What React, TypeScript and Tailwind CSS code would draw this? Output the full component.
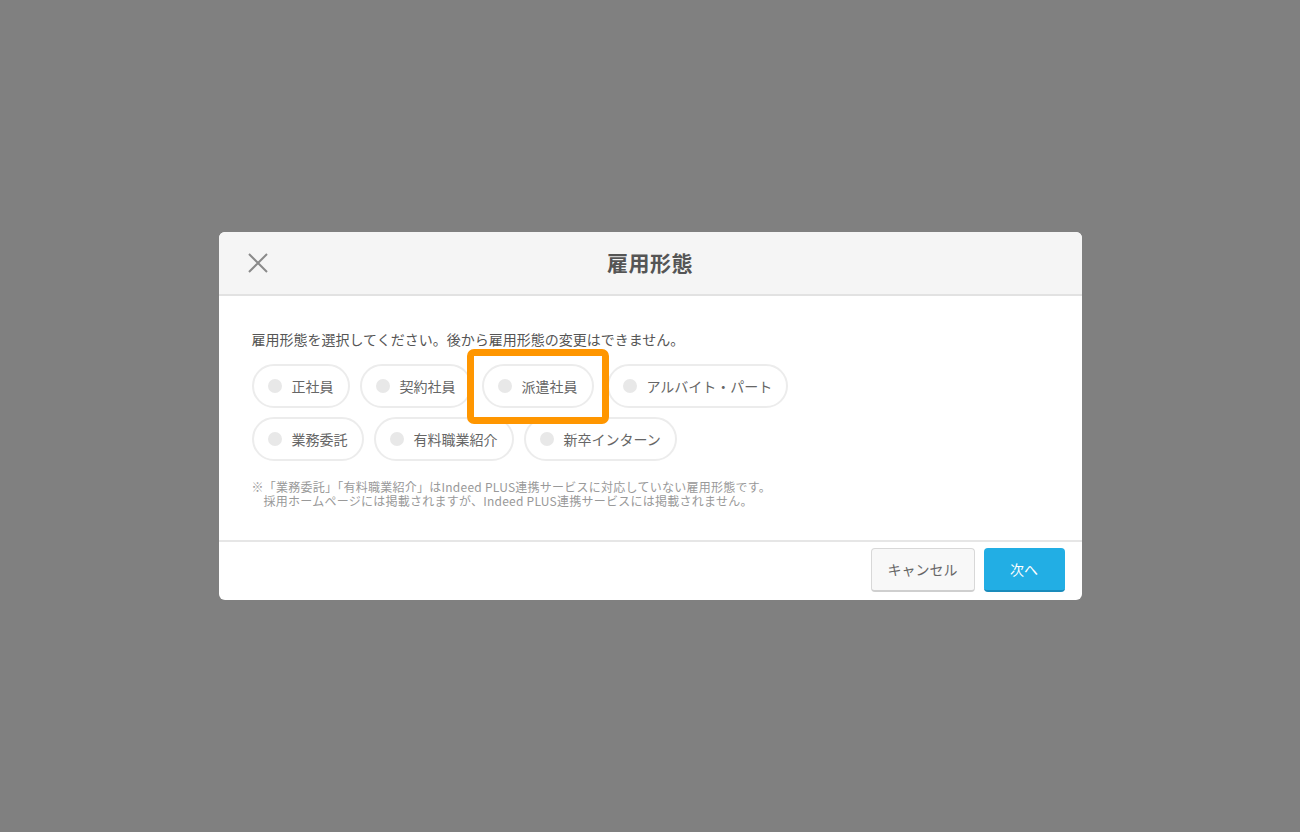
import React from "react";

const FONT = {
  fontFamily:
    '"Noto Sans CJK JP", "Noto Sans", "Liberation Sans", sans-serif',
};

type PillProps = { label: string; highlighted?: boolean; className?: string };

const Pill = ({ label, highlighted, className = "" }: PillProps) => (
  <div className={`relative ${className}`}>
    <label className="flex h-[44px] items-center gap-[10px] rounded-full border-2 border-[#ececec] bg-white px-[14px] text-[14px] text-[#666] cursor-pointer">
      <span className="block h-[14px] w-[14px] rounded-full bg-[#e8e8e8]" />
      <span className="whitespace-nowrap">{label}</span>
    </label>
    {highlighted && (
      <div className="pointer-events-none absolute -top-[15px] -bottom-[16px] -left-[15px] -right-[15px] z-10 rounded-[7px] border-[7px] border-[#ff9600]" />
    )}
  </div>
);

export default function App() {
  return (
    <div
      className="flex h-[832px] w-full items-center justify-center bg-[#808080]"
      style={FONT}
    >
      <div className="w-[863px] overflow-hidden rounded-[6px] bg-white">
        {/* header */}
        <div className="grid h-[64px] grid-cols-[1fr_auto_1fr] items-center border-b-2 border-[#e2e2e2] bg-[#f5f5f5] px-[29px]">
          <button className="flex h-[20px] w-[20px] items-center justify-center">
            <svg width="20" height="20" viewBox="0 0 20 20">
              <path
                d="M1 1L19 19M19 1L1 19"
                stroke="#8a8a8a"
                strokeWidth="2"
                fill="none"
              />
            </svg>
          </button>
          <h2 className="text-[21px] font-bold tracking-[0.5px] text-[#555]">
            雇用形態
          </h2>
          <div />
        </div>

        {/* body */}
        <div className="px-[33px] pt-[33px] pb-[32px]">
          <p className="text-[14px] leading-[20px] text-[#555]">
            雇用形態を選択してください。後から雇用形態の変更はできません。
          </p>
          <div className="mt-[15px] flex flex-col gap-[9px]">
            <div className="flex gap-[10px]">
              <Pill label="正社員" />
              <Pill label="契約社員" />
              <Pill label="派遣社員" highlighted />
              <Pill label="アルバイト・パート" className="ml-[3px]" />
            </div>
            <div className="flex gap-[10px]">
              <Pill label="業務委託" />
              <Pill label="有料職業紹介" />
              <Pill label="新卒インターン" />
            </div>
          </div>
          <div className="mt-[19px] text-[12px] leading-[14px] tracking-[0.25px] text-[#999]">
            <p>
              ※「業務委託」「有料職業紹介」はIndeed
              PLUS連携サービスに対応していない雇用形態です。
            </p>
            <p className="pl-[12px]">
              採用ホームページには掲載されますが、Indeed
              PLUS連携サービスには掲載されません。
            </p>
          </div>
        </div>

        {/* footer */}
        <div className="flex h-[60px] items-start justify-end gap-[9px] border-t-2 border-[#e6e6e6] pt-[6px] pr-[17px]">
          <button className="h-[44px] w-[104px] rounded-[4px] border border-b-2 border-[#d8d8d8] border-b-[#cfcfcf] bg-[#f8f8f8] text-[14px] text-[#666]">
            キャンセル
          </button>
          <button className="h-[44px] w-[81px] rounded-[4px] border-b-2 border-[#1a8cbc] bg-[#22aee4] text-[14px] text-white">
            次へ
          </button>
        </div>
      </div>
    </div>
  );
}
